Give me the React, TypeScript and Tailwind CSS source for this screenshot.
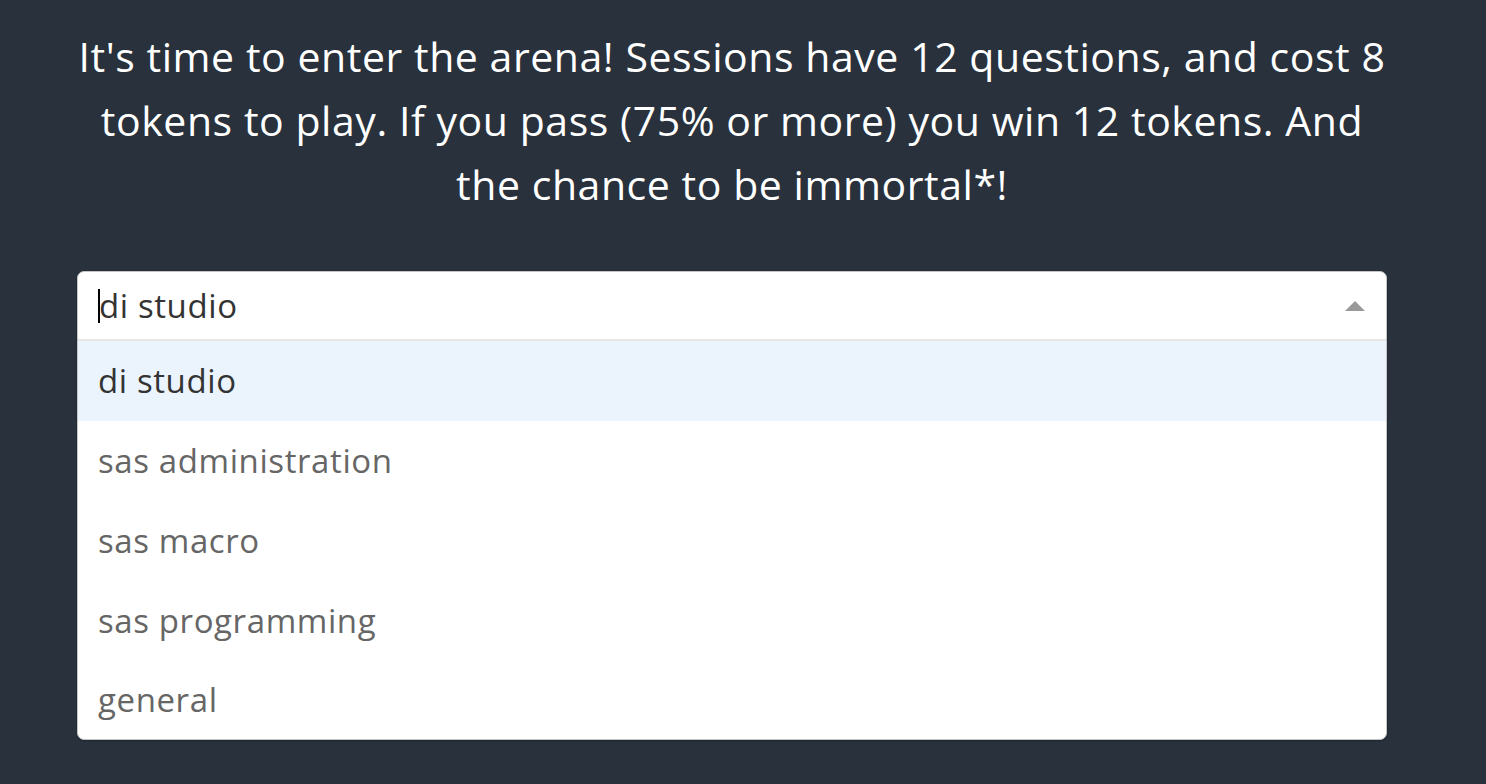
import React from 'react';

const options = ['di studio', 'sas administration', 'sas macro', 'sas programming', 'general'];

const ArenaSelect = () => {
  return (
    <div className="mt-[55px] w-[1310px] rounded-[7px] border border-[#c4c4c4] bg-white shadow-[0_1px_2px_rgba(0,0,0,0.25)] overflow-hidden">
      <div className="h-[67px] flex items-center pl-[20px] pr-[20px]">
        <span className="w-[2px] h-[34px] bg-black -mr-[1px]" />
        <span className="text-[33px] tracking-[0.6px] text-[#333333] flex-1">di studio</span>
        <svg width="20" height="10" viewBox="0 0 20 10" className="mr-[1px]">
          <polygon points="0,10 10,0 20,10" fill="#999999" />
        </svg>
      </div>
      <div className="h-[2px] bg-[#e6e6e6]" />
      <ul>
        {options.map((opt, i) => (
          <li
            key={opt}
            className={`${i === options.length - 1 ? 'h-[78px]' : 'h-[80px]'} flex items-center pl-[20px] text-[33px] tracking-[0.6px] ${
              i === 0 ? 'bg-[#ebf4fd] text-[#333333]' : 'text-[#666666]'
            }`}
          >
            {opt}
          </li>
        ))}
      </ul>
    </div>
  );
};

export default function App() {
  return (
    <div className="min-h-screen bg-[#28313c] font-['Open_Sans',sans-serif]">
      <div className="ml-[77px] w-[1310px] pt-[24px]">
        <p className="text-white text-center text-[41px] tracking-[0.55px] leading-[64px] whitespace-nowrap">
          It's time to enter the arena! Sessions have 12 questions, and cost 8
          <br />
          tokens to play. If you pass (75% or more) you win 12 tokens. And
          <br />
          the chance to be immortal*!
        </p>
        <ArenaSelect />
      </div>
    </div>
  );
}
